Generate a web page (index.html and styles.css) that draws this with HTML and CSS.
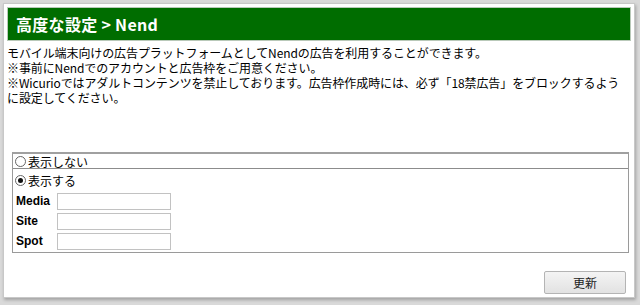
FILE: index.html
```html
<!DOCTYPE html>
<html lang="ja">
<head>
<meta charset="utf-8">
<link rel="stylesheet" href="styles.css">
</head>
<body>
<div class="panel">
  <div class="header"><h1>高度な設定 &gt; Nend</h1></div>
  <div class="desc">
    <p>モバイル端末向けの広告プラットフォームとしてNendの広告を利用することができます。</p>
    <p>※事前にNendでのアカウントと広告枠をご用意ください。</p>
    <p>※Wicurioではアダルトコンテンツを禁止しております。広告枠作成時には、必ず「18禁広告」をブロックするよう<br>に設定してください。</p>
  </div>
  <div class="box">
    <label class="opt first"><input type="radio" name="show" class="radio"><span>表示しない</span></label>
    <div class="on">
      <label class="opt"><input type="radio" name="show" class="radio" checked><span>表示する</span></label>
      <div class="field"><span class="lbl">Media</span><input type="text" class="txt"></div>
      <div class="field"><span class="lbl">Site</span><input type="text" class="txt"></div>
      <div class="field"><span class="lbl">Spot</span><input type="text" class="txt"></div>
    </div>
  </div>
  <div class="actions"><button class="btn">更新</button></div>
</div>
</body>
</html>
```
FILE: styles.css
```css
html, body {
  margin: 0;
  padding: 0;
}
body {
  width: 640px;
  height: 305px;
  background: #d9d9d9;
  font-family: "Noto Sans CJK JP", "Noto Sans", sans-serif;
  font-size: 12px;
  color: #000;
  overflow: hidden;
}
.panel {
  box-sizing: border-box;
  margin: 3px 0 0 3px;
  width: 632px;
  height: 295px;
  background: #fff;
  border: 1px solid #c8c8c8;
  box-shadow: 1px 2px 3px rgba(0,0,0,0.25);
  padding: 3px;
  display: flex;
  flex-direction: column;
}
.header {
  height: 34px;
  background: #006d00;
  border: 1px solid #b9c9b9;
  box-sizing: border-box;
  display: flex;
  align-items: center;
  padding-left: 8px;
}
.header h1 {
  margin: 0;
  color: #fff;
  font-family: "Noto Sans CJK JP", sans-serif;
  font-weight: bold;
  font-size: 16px;
  letter-spacing: 0.3px;
}
.desc {
  margin-top: 4px;
  line-height: 15px;
  letter-spacing: -0.1px;
}
.desc p {
  margin: 0;
}
.box {
  margin: auto 2px 0 5px;
  border: 1px solid #9a9a9a;
  border-top: 2px solid #a0a0a0;
  display: flex;
  flex-direction: column;
}
.opt {
  display: flex;
  align-items: center;
  height: 14px;
  padding-left: 2px;
  gap: 1px;
}
.opt.first {
  border-bottom: 1px solid #8c8c8c;
}
.on {
  display: flex;
  flex-direction: column;
  padding-top: 1px;
  padding-bottom: 1px;
}
.on .opt {
  height: 21px;
}
.radio {
  appearance: none;
  -webkit-appearance: none;
  margin: 0 1px 0 0;
  width: 11px;
  height: 11px;
  border: 1px solid #666;
  border-radius: 50%;
  box-sizing: border-box;
  position: relative;
}
.radio:checked::after {
  content: "";
  position: absolute;
  left: 2px;
  top: 2px;
  width: 5px;
  height: 5px;
  border-radius: 50%;
  background: #111;
}
.field {
  display: flex;
  align-items: center;
  height: 20px;
  padding-left: 3px;
}
.lbl {
  width: 41px;
  font-family: "Liberation Sans", Arial, sans-serif;
  font-weight: bold;
  font-size: 12px;
}
.txt {
  box-sizing: border-box;
  width: 114px;
  height: 17px;
  margin: 0;
  border: 1px solid #c2c2c2;
  background: #fff;
  padding: 0 2px;
}
.actions {
  display: flex;
  justify-content: flex-end;
  padding: 18px 5px 0 0;
}
.btn {
  box-sizing: border-box;
  width: 82px;
  height: 23px;
  border: 1px solid #b4b4b4;
  border-radius: 2px;
  background: linear-gradient(#f4f4f4, #e2e2e2);
  font-family: "Noto Sans CJK JP", sans-serif;
  font-size: 12px;
  color: #222;
  padding: 0;
}
```
